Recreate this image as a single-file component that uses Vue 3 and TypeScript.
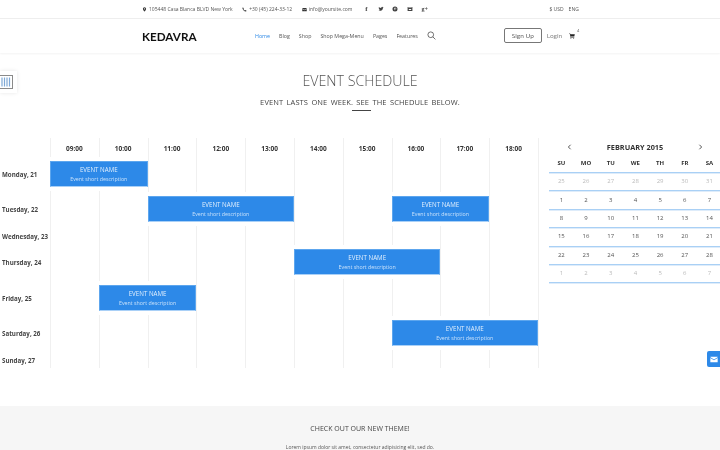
<template>
  <div class="page">
    <div class="topbar">
      <div class="topbar-inner">
        <div class="contacts">
          <span class="contact">
            <svg class="ic" viewBox="0 0 10 10"><path d="M5 .5a3.200 3.200 0 0 0-3.200 3.200C1.800 6 5 9.500 5 9.500S8.200 6 8.200 3.700A3.200 3.200 0 0 0 5 .5zm0 4.400a1.200 1.200 0 1 1 0-2.400 1.200 1.200 0 0 1 0 2.400z" /></svg>
            105448 Casa Blanca BLVD New York
          </span>
          <span class="contact">
            <svg class="ic" viewBox="0 0 10 10"><path d="M2.200 .8 3.700 3 2.900 4c.5 1.300 1.600 2.400 3 3l1-.8 2.200 1.500-.9 1.500C4.500 9.500.6 5.500.7 1.700z" /></svg>
            +30 (45) 224-33-12
          </span>
          <span class="contact">
            <svg class="ic" viewBox="0 0 10 10"><path d="M.5 2h9v.8L5 5.500.5 2.800zm0 1.900L5 6.600l4.500-2.700V8.500h-9z" /></svg>
            info@yoursite.com
          </span>
        </div>
        <div class="socials">
          <span class="social f">f</span>
          <svg class="soc" viewBox="0 0 10 10"><path d="M9.500 2.300c-.3.200-.7.300-1 .3.400-.2.600-.6.800-1-.4.200-.7.400-1.100.4a1.700 1.700 0 0 0-2.900 1.500C3.800 3.400 2.400 2.700 1.500 1.600c-.5.800-.2 1.800.5 2.300-.3 0-.5-.1-.8-.2 0 .8.600 1.500 1.400 1.700-.3.100-.5.100-.8 0 .2.700.9 1.200 1.600 1.200-.8.600-1.700.9-2.600.8 2.600 1.600 7.500.6 7.500-4.400.4-.2.800-.5 1.200-.7z" /></svg>
          <svg class="soc" viewBox="0 0 10 10"><path fill-rule="evenodd" d="M5 .8a4.200 4.200 0 1 0 0 8.400A4.200 4.200 0 0 0 5 .8zm.3 2c-1.300 0-2 .8-2 1.700 0 .5.200.9.600 1l.2-.5c-.3-.4-.2-1.600 1.100-1.600 1.500 0 1.200 2.300.2 2.300-.4 0-.6-.3-.5-.6l.3-1.100c0-.6-.8-.5-.9.200l.1.500-.6 2.300.4.100.5-1.500c.2.300.5.400.8.400 1.100 0 1.600-1 1.600-1.800 0-.9-.8-1.400-1.800-1.400z" /></svg>
          <svg class="soc" viewBox="0 0 10 10"><path fill-rule="evenodd" d="M1 1.500h8v7H1zm1 .8v1.200h6V2.300zM3 5v1.800h4V5z" /></svg>
          <span class="social g">g+</span>
        </div>
        <div class="locale">
          <span>$ USD</span>
          <span>ENG</span>
        </div>
      </div>
    </div>

    <header class="navbar">
      <div class="navbar-inner">
        <div class="logo">KEDAVRA</div>
        <nav class="menu">
          <a v-for="item in menu" :key="item" :class="{ active: item === 'Home' }">{{ item }}</a>
        </nav>
        <svg class="search" viewBox="0 0 12 12"><circle cx="5" cy="5" r="3.800" /><path d="m7.800 7.800 3.400 3.400" /></svg>
        <div class="account">
          <button class="signup">Sign Up</button>
          <a class="login">Login</a>
          <span class="cart">
            <svg viewBox="0 0 10 10"><path d="M.3 1h1.600l.3 1h7.500L8.800 6H3l-.2.7h6v.7H2l.4-1.600L1.300 1.700H.3z" /><circle cx="3.200" cy="8.800" r=".8" /><circle cx="7.800" cy="8.800" r=".8" /></svg>
            <sup>4</sup>
          </span>
        </div>
      </div>
    </header>

    <div class="side-tab">
      <svg viewBox="0 0 16 14"><rect x=".5" y=".5" width="15" height="13" fill="none" stroke="#8a8a8a" /><path d="M5 2.500v9M7.500 2.500v9M10 2.500v9M12.500 2.500v9" stroke="#7fa9d6" stroke-width="1.200" /></svg>
    </div>

    <section class="title-block">
      <h1>EVENT SCHEDULE</h1>
      <p>EVENT LASTS ONE WEEK. SEE THE SCHEDULE BELOW.</p>
      <div class="rule"></div>
    </section>

    <main class="content">
      <div class="schedule">
        <div v-for="(hour, i) in hours" :key="'l' + hour" class="line" :style="{ gridColumn: i + 2 }"></div>
        <div v-for="(hour, i) in hours" :key="hour" class="hour" :style="{ gridColumn: i + 2 }">{{ hour }}</div>
        <div
          v-for="(day, i) in days"
          :key="day"
          class="day"
          :style="{ gridRow: i + 2 }"
        >{{ day }}</div>
        <div
          v-for="ev in events"
          :key="ev.row + '-' + ev.from"
          class="event"
          :style="{ gridRow: ev.row + 1, gridColumn: ev.from + 2 + ' / span ' + ev.span }"
        >
          <div class="event-name">EVENT NAME</div>
          <div class="event-desc">Event short description</div>
        </div>
      </div>

      <aside class="calendar">
        <div class="cal-head">
          <svg class="arrow" viewBox="0 0 6 8"><path d="M4.500 1 1.500 4l3 3" /></svg>
          <strong>FEBRUARY 2015</strong>
          <svg class="arrow" viewBox="0 0 6 8"><path d="M1.500 1l3 3-3 3" /></svg>
        </div>
        <div class="cal-row cal-weekdays">
          <span v-for="d in weekdays" :key="d">{{ d }}</span>
        </div>
        <div v-for="(w, i) in weeks" :key="i" class="cal-row">
          <span v-for="d in w" :key="d.n" :class="{ muted: d.muted }">{{ d.n }}</span>
        </div>
      </aside>
    </main>

    <footer class="promo">
      <h2>CHECK OUT OUR NEW THEME!</h2>
      <p>Lorem ipsum dolor sit amet, consectetur adipisicing elit, sed do.</p>
    </footer>

    <div class="mail-tab">
      <svg viewBox="0 0 12 10"><path d="M.5 1h11v.6L6 5 .5 1.600zm0 1.800L6 6.200l5.500-3.400V9H.5z" fill="#fff" /></svg>
    </div>
  </div>
</template>

<script setup lang="ts">
interface CalDay {
  n: number
  muted: boolean
}

const menu = ['Home', 'Blog', 'Shop', 'Shop Mega-Menu', 'Pages', 'Features']
const hours = ['09:00', '10:00', '11:00', '12:00', '13:00', '14:00', '15:00', '16:00', '17:00', '18:00']
const days = ['Monday, 21', 'Tuesday, 22', 'Wednesday, 23', 'Thursday, 24', 'Friday, 25', 'Saturday, 26', 'Sunday, 27']
const weekdays = ['SU', 'MO', 'TU', 'WE', 'TH', 'FR', 'SA']

const events = [
  { row: 1, from: 0, span: 2 },
  { row: 2, from: 2, span: 3 },
  { row: 2, from: 7, span: 2 },
  { row: 4, from: 5, span: 3 },
  { row: 5, from: 1, span: 2 },
  { row: 6, from: 7, span: 3 }
]

function week(start: number, muted = false, wrap = 99): CalDay[] {
  return Array.from({ length: 7 }, (_, i) => ({ n: ((start + i - 1) % wrap) + 1, muted }))
}

const weeks: CalDay[][] = [week(25, true), week(1), week(8), week(15), week(22, false, 28), week(1, true)]
</script>

<style>
html,
body {
  margin: 0;
  background: #fff;
  overflow: hidden;
}
</style>

<style scoped>
.page {
  position: relative;
  width: 720px;
  height: 450px;
  overflow: hidden;
  font-family: 'Open Sans', 'Liberation Sans', sans-serif;
  color: #555;
  /* own layer, keeps the small text antialiased in gray */
  will-change: transform;
}

.topbar {
  height: 18px;
  border-bottom: 1px solid #eee;
}

.topbar-inner {
  display: flex;
  align-items: center;
  height: 18px;
  padding-left: 142px;
  font-size: 5px;
  color: #555;
}

.contacts {
  display: flex;
  gap: 9.500px;
}

.contact {
  display: flex;
  align-items: center;
  gap: 2px;
}

.ic {
  width: 5px;
  height: 5px;
  fill: #333;
}

.socials {
  display: flex;
  align-items: center;
  gap: 8.500px;
  margin-left: 11px;
}

.social {
  width: 6px;
  font-weight: 700;
  color: #444;
  text-align: center;
}

.social.f {
  font-family: 'Liberation Serif', serif;
  font-size: 7px;
}

.social.g {
  font-size: 6px;
  font-family: 'Liberation Serif', serif;
}

.soc {
  width: 6px;
  height: 6px;
  fill: #444;
}

.locale {
  display: flex;
  gap: 5px;
  margin-left: 122px;
}

.navbar {
  height: 34px;
  box-shadow: 0 1px 2px rgba(0, 0, 0, 0.05);
}

.navbar-inner {
  display: flex;
  align-items: center;
  height: 33px;
  padding-left: 142px;
}

.logo {
  width: 113px;
  font-family: Lato, 'Liberation Sans', sans-serif;
  font-weight: 700;
  font-size: 11.700px;
  color: #111;
}

.menu {
  display: flex;
  gap: 9px;
  font-size: 5.300px;
  color: #555;
}

.menu .active {
  color: #2d89e6;
}

.search {
  width: 9px;
  height: 9px;
  margin-left: 9px;
  fill: none;
  stroke: #444;
  stroke-width: 1;
}

.account {
  display: flex;
  align-items: center;
  margin-left: 68px;
}

.signup {
  width: 38px;
  height: 15px;
  padding: 0;
  border: 1px solid #777;
  border-radius: 2px;
  background: #fff;
  font-family: Lato, 'Open Sans', sans-serif;
  font-size: 6.500px;
  color: #666;
}

.login {
  margin-left: 5px;
  font-family: Lato, 'Open Sans', sans-serif;
  font-size: 6.500px;
  color: #888;
}

.cart {
  position: relative;
  display: flex;
  margin-left: 7px;
}

.cart svg {
  width: 6px;
  height: 6px;
  fill: #222;
}

.cart sup {
  position: absolute;
  top: -5px;
  right: -4px;
  font-size: 4px;
}

.side-tab {
  position: absolute;
  top: 71px;
  left: 0;
  display: flex;
  align-items: center;
  width: 17px;
  height: 22px;
  background: #fff;
  box-shadow: 0 0 4px rgba(0, 0, 0, 0.1);
}

.side-tab svg {
  flex: none;
  width: 16px;
  height: 14px;
  margin-left: -3px;
}

.title-block {
  height: 85px;
  text-align: center;
  overflow: hidden;
}

.title-block h1 {
  margin: 18px 0 0;
  font-size: 14.200px;
  line-height: 19px;
  font-weight: 300;
  color: #555;
}

.title-block p {
  margin: 7px 0 0;
  font-size: 7.500px;
  line-height: 10px;
  letter-spacing: 0.1px;
  word-spacing: 1.300px;
  color: #444;
}

.rule {
  width: 19px;
  height: 1px;
  margin: 3px 0 0 352px;
  background: #444;
}

.content {
  display: flex;
}

.schedule {
  display: grid;
  grid-template-columns: 50px repeat(10, 48.800px);
  grid-template-rows: 23px 35px 27px 26px 36px 35px 27px 21px;
  width: 538px;
  height: 230px;
  border-right: 1px solid #f0f0f0;
}

.line {
  grid-row: 1 / 9;
  border-left: 1px solid #f0f0f0;
}

.hour {
  grid-row: 1;
  align-self: center;
  padding-bottom: 2px;
  text-align: center;
  font-size: 6.500px;
  font-weight: 700;
  color: #333;
  z-index: 1;
}

.day {
  grid-column: 1;
  align-self: start;
  margin-top: 8px;
  padding-left: 2px;
  font-size: 6.200px;
  line-height: 11px;
  font-weight: 700;
  color: #444;
}

.event {
  box-sizing: border-box;
  align-self: start;
  height: 26px;
  background: #2d89e8;
  color: #fff;
  text-align: center;
  border: 1px solid #5da6ee;
  border-bottom-color: #a9d0f7;
  box-shadow: 0 -4px 0 #fff, 0 4px 0 #fff;
  z-index: 1;
}

.event-name {
  padding-top: 3px;
  font-size: 6.200px;
  line-height: 9px;
  color: #e3f0fd;
}

.event-desc {
  font-size: 5.300px;
  line-height: 10px;
  color: #c8e1fa;
}

.calendar {
  width: 171px;
  margin-left: 10px;
}

.cal-head {
  display: flex;
  align-items: center;
  justify-content: space-between;
  height: 17px;
  padding: 0 17px 0 18px;
  color: #333;
}

.cal-head strong {
  font-size: 7.300px;
  font-weight: 700;
}

.arrow {
  width: 5px;
  height: 6px;
  fill: none;
  stroke: #444;
  stroke-width: 1.200;
}

.cal-row {
  display: grid;
  grid-template-columns: repeat(7, 24.700px);
  box-sizing: border-box;
  height: 18.400px;
  padding-bottom: 1px;
  align-items: center;
  text-align: center;
  font-size: 6px;
  color: #555;
  border-bottom: 1px solid #a9d0f5;
  box-shadow: 0 1px 0 #deecfa;
}

.cal-weekdays {
  height: 18px;
  font-weight: 700;
  color: #333;
}

.muted {
  color: #bbb;
}

.promo {
  position: absolute;
  top: 406px;
  left: 0;
  right: 0;
  height: 44px;
  background: #f6f6f6;
  text-align: center;
}

.promo h2 {
  margin: 18px 0 0;
  font-size: 7px;
  line-height: 10px;
  font-weight: 400;
  color: #444;
}

.promo p {
  margin: 10px 0 0;
  font-size: 5px;
  line-height: 6px;
  color: #555;
}

.mail-tab {
  position: absolute;
  top: 351px;
  right: 0;
  display: flex;
  align-items: center;
  justify-content: flex-end;
  box-sizing: border-box;
  width: 13px;
  height: 16px;
  padding-right: 2px;
  background: #2d89e8;
  border-radius: 2px 0 0 2px;
}

.mail-tab svg {
  width: 8px;
  height: 7px;
}
</style>
